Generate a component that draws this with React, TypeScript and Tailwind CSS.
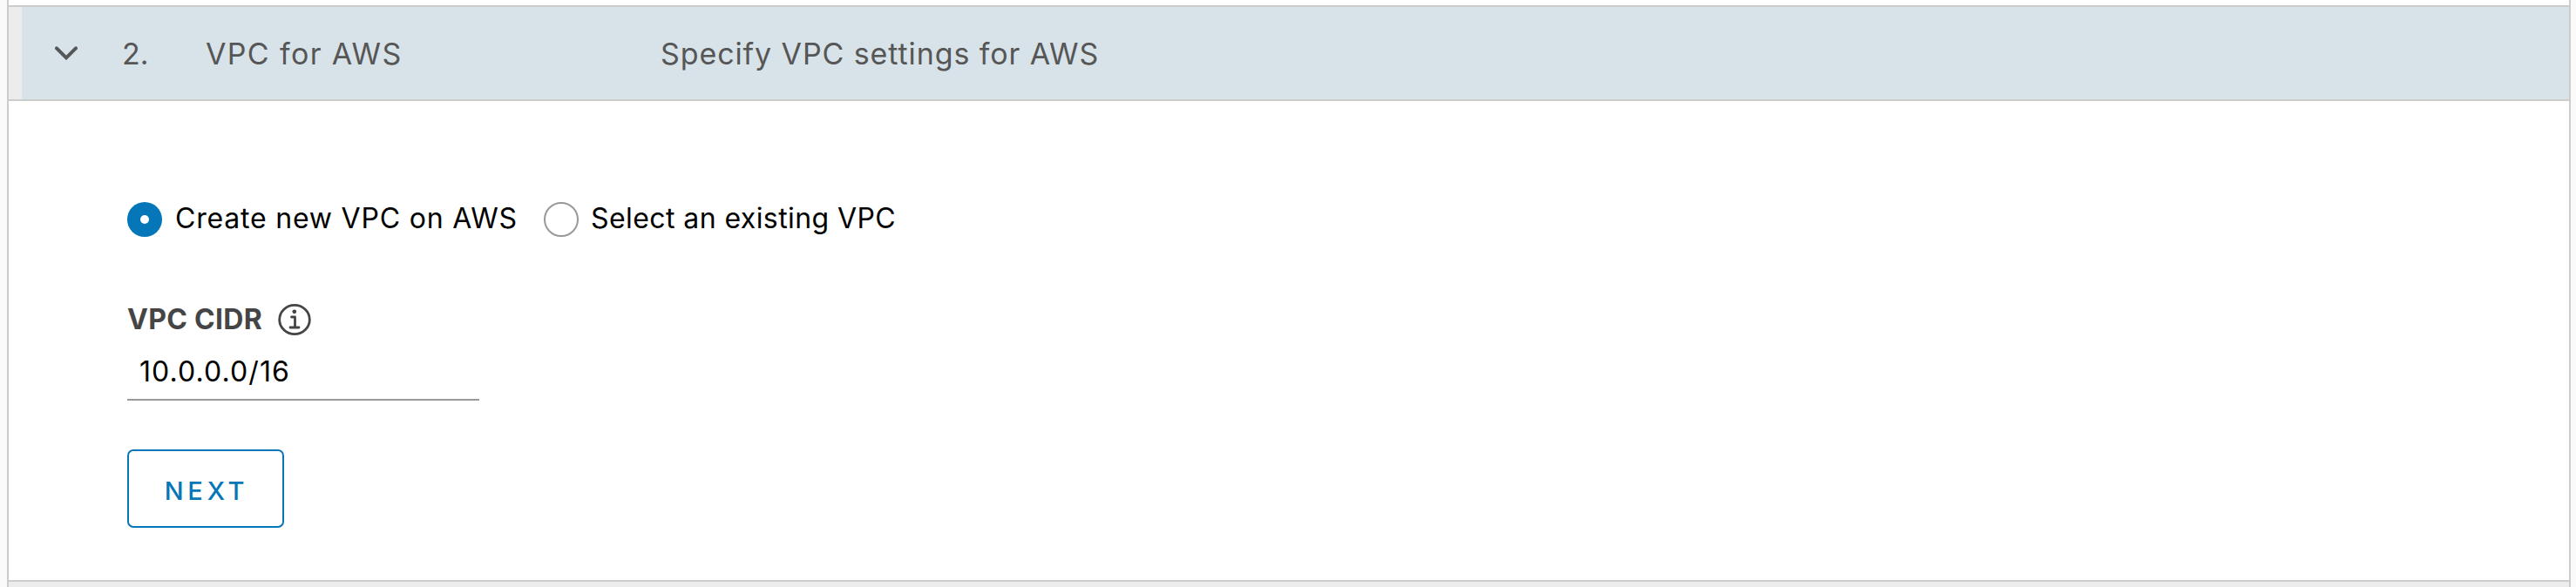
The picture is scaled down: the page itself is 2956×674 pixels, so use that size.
import React from "react";

function Radio({ checked, label, className }: { checked?: boolean; label: string; className: string }) {
  return (
    <label className="flex items-center">
      {checked ? (
        <span className="flex size-[40px] shrink-0 items-center justify-center rounded-full bg-[#0577b9]">
          <span className="size-[10px] rounded-full bg-white" />
        </span>
      ) : (
        <span className="size-[40px] shrink-0 rounded-full border-2 border-[#999999] bg-white" />
      )}
      <span className={`whitespace-nowrap pb-[2px] text-[32px] leading-[38px] text-black ${className}`}>{label}</span>
    </label>
  );
}

export default function App() {
  return (
    <div className="h-[674px] w-full overflow-hidden bg-[#fafafa] pl-[8px] pr-[6px] font-['Inter',sans-serif]">
      <div className="flex h-full flex-col border-x-2 border-[#cccccc] bg-white pt-[6px]">
        <header className="flex h-[110px] shrink-0 border-y-2 border-[#cccccc] bg-[#d8e3e9] text-[34px] leading-[40px] text-[#565656]">
          <div className="w-[15px] bg-[#ececec]" />
          <div className="flex items-center pl-[38px]">
            <svg className="h-[16px] w-[26px]" viewBox="0 0 26 16" fill="none" stroke="#565656" strokeWidth="4" strokeLinecap="round">
              <path d="M2 2.3 L13 13.3 L24 2.3" />
            </svg>
            <span className="w-[96px] pl-[51px] pt-[2px]">2.</span>
            <span className="w-[573px] whitespace-nowrap pl-[51px] pt-[2px] tracking-[1.35px]">VPC for AWS</span>
            <span className="whitespace-nowrap pt-[2px] tracking-[0.9px]">Specify VPC settings for AWS</span>
          </div>
        </header>

        <main className="flex h-[550px] shrink-0 flex-col items-start pl-[136px] pt-[116px]">
          <div className="flex items-center">
            <div className="w-[478px]">
              <Radio checked label="Create new VPC on AWS" className="pl-[15px] tracking-[0.8px]" />
            </div>
            <Radio label="Select an existing VPC" className="pl-[14px] tracking-[0.42px]" />
          </div>

          <div className="mt-[75px] flex h-[40px] items-center">
            <span className="w-[173px] whitespace-nowrap text-[32px] font-bold leading-[40px] tracking-[0.3px] text-[#454545]">VPC CIDR</span>
            <svg className="size-[38px]" viewBox="0 0 38 38" fill="none" stroke="#454545" strokeWidth="2.8" strokeLinecap="round" strokeLinejoin="round">
              <ellipse cx="19" cy="19" rx="17.3" ry="16.7" />
              <circle cx="18.8" cy="9.8" r="2.4" fill="#454545" stroke="none" />
              <path d="M15.5 16H19.5V28M14 28H24" />
            </svg>
          </div>
          <div className="flex h-[73px] w-[404px] items-end border-b-2 border-[#999999] pb-[11px] pl-[14px]">
            <span className="whitespace-nowrap text-[32px] leading-[40px] tracking-[1.1px] text-black">10.0.0.0/16</span>
          </div>

          <button className="mt-[56px] flex h-[90px] w-[180px] items-center justify-center rounded-[7px] border-2 border-[#0577b9] pl-[2px] pt-[6px] text-[29px] font-medium leading-[40px] tracking-[4.8px] text-[#0577b9]">
            NEXT
          </button>
        </main>

        <footer className="h-[8px] shrink-0 border-t-2 border-[#cccccc] bg-[#ececec]" />
      </div>
    </div>
  );
}
